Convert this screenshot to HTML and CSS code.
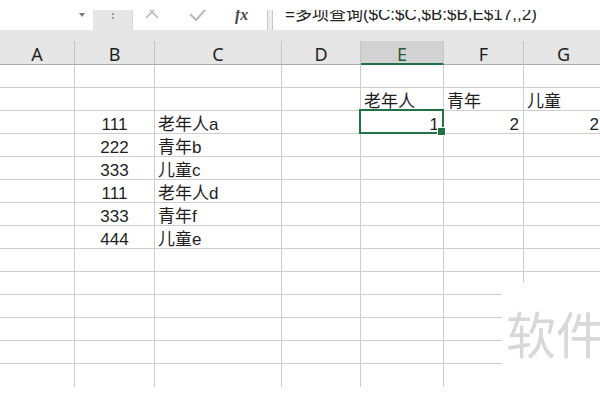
FILE: index.html
```html
<!DOCTYPE html>
<html lang="zh-CN">
<head>
<meta charset="utf-8">
<title>Sheet</title>
<link rel="stylesheet" href="styles.css">
</head>
<body>
<div class="app">
  <div class="topstrip"></div>
  <div class="fbar">
    <div class="namebox"><span class="dd"></span></div>
    <div class="grip"><i></i><i></i></div>
    <div class="btns">
      <svg class="ico-x" width="14" height="14" viewBox="0 0 14 14"><path d="M1 1 L13 13 M13 1 L1 13" stroke="#b9b9b9" stroke-width="1.6" fill="none"/></svg>
      <svg class="ico-ok" width="18" height="16" viewBox="0 0 18 16"><path d="M1 8 L7 14 L17 3" stroke="#b9b9b9" stroke-width="2" fill="none"/></svg>
      <span class="fx">fx</span>
    </div>
    <div class="fgap"></div>
    <div class="formula"><span class="ftext">=多项查询($C:$C,$B:$B,E$17,,2)</span></div>
  </div>
  <div class="band"></div>
  <div class="sheet">
    <div class="h">A</div><div class="h">B</div><div class="h">C</div><div class="h">D</div><div class="h sel">E</div><div class="h">F</div><div class="h">G</div>

    <div class="c"></div><div class="c"></div><div class="c"></div><div class="c"></div><div class="c"></div><div class="c"></div><div class="c"></div>

    <div class="c"></div><div class="c"></div><div class="c"></div><div class="c"></div><div class="c t">老年人</div><div class="c t">青年</div><div class="c t">儿童</div>

    <div class="c"></div><div class="c m">111</div><div class="c t">老年人a</div><div class="c"></div><div class="c n active">1</div><div class="c n">2</div><div class="c n">2</div>

    <div class="c"></div><div class="c m">222</div><div class="c t">青年b</div><div class="c"></div><div class="c"></div><div class="c"></div><div class="c"></div>

    <div class="c"></div><div class="c m">333</div><div class="c t">儿童c</div><div class="c"></div><div class="c"></div><div class="c"></div><div class="c"></div>

    <div class="c"></div><div class="c m">111</div><div class="c t">老年人d</div><div class="c"></div><div class="c"></div><div class="c"></div><div class="c"></div>

    <div class="c"></div><div class="c m">333</div><div class="c t">青年f</div><div class="c"></div><div class="c"></div><div class="c"></div><div class="c"></div>

    <div class="c"></div><div class="c m">444</div><div class="c t">儿童e</div><div class="c"></div><div class="c"></div><div class="c"></div><div class="c"></div>

    <div class="c"></div><div class="c"></div><div class="c"></div><div class="c"></div><div class="c"></div><div class="c"></div><div class="c"></div>
    <div class="c"></div><div class="c"></div><div class="c"></div><div class="c"></div><div class="c"></div><div class="c"></div><div class="c"></div>
    <div class="c"></div><div class="c"></div><div class="c"></div><div class="c"></div><div class="c"></div><div class="c"></div><div class="c"></div>
    <div class="c"></div><div class="c"></div><div class="c"></div><div class="c"></div><div class="c"></div><div class="c"></div><div class="c"></div>
    <div class="c"></div><div class="c"></div><div class="c"></div><div class="c"></div><div class="c"></div><div class="c"></div><div class="c"></div>

    <div class="e"></div><div class="e"></div><div class="e"></div><div class="e"></div><div class="e"></div><div class="e"></div><div class="e"></div>
  </div>
  <div class="wm">软件</div>
</div>
</body>
</html>
```

FILE: styles.css
```css
* { box-sizing: border-box; }
html, body {
  margin: 0;
  padding: 0;
  background: #fff;
  width: 600px;
  height: 400px;
  overflow: hidden;
}
.app {
  position: relative;
  width: 600px;
  height: 400px;
  overflow: hidden;
  font-family: "Liberation Sans", "Noto Sans CJK SC", sans-serif;
  color: #1e1e1e;
}
.topstrip {
  height: 10px;
  background: #fff;
}
.fbar {
  height: 20px;
  display: flex;
  overflow: hidden;
  background: #fff;
}
.namebox {
  width: 93px;
  background: #fff;
  display: flex;
  justify-content: flex-end;
  align-items: flex-start;
  padding-right: 8px;
}
.dd {
  margin-top: 3px;
  width: 0;
  height: 0;
  border-left: 3px solid transparent;
  border-right: 3px solid transparent;
  border-top: 4px solid #7a7a7a;
}
.grip {
  width: 39px;
  background: #e6e6e6;
  display: flex;
  flex-direction: column;
  align-items: center;
  padding-top: 3px;
  gap: 2px;
}
.grip i {
  display: block;
  width: 2px;
  height: 2px;
  background: #9c9c9c;
}
.btns {
  width: 136px;
  background: #fff;
  border-left: 1px solid #d6d6d6;
  border-right: 1px solid #c8c8c8;
  display: flex;
  align-items: flex-start;
  overflow: hidden;
}
.ico-x {
  flex: none;
  margin-left: 12px;
  margin-top: -5px;
}
.ico-ok {
  flex: none;
  margin-left: 30px;
  margin-top: -4px;
}
.fx {
  margin-left: 28px;
  margin-top: -3px;
  font-family: "Liberation Serif", serif;
  font-style: italic;
  font-weight: bold;
  font-size: 16px;
  line-height: 16px;
  color: #4a4a4a;
}
.fgap {
  width: 4px;
  background: #ececec;
}
.formula {
  flex: 1;
  background: #fff;
  border-left: 1px solid #c8c8c8;
  padding-left: 12px;
  overflow: hidden;
  white-space: nowrap;
}
.ftext {
  display: block;
  margin-top: -4px;
  font-size: 17px;
  line-height: 17px;
  color: #222;
}
.band {
  height: 11px;
  background: #e6e6e6;
}
.sheet {
  width: 604px;
  display: grid;
  grid-template-columns: 75px 80px 127px 79px 83px 80px 80px;
  grid-template-rows: 24px repeat(14, 23px) 2px;
}
.h {
  background: #e6e6e6;
  border-right: 1px solid #c6c6c6;
  border-bottom: 1px solid #ababab;
  display: flex;
  align-items: flex-end;
  justify-content: center;
  padding-bottom: 1px;
  font-family: "Noto Sans", "Liberation Sans", sans-serif;
  font-size: 18px;
  line-height: 18px;
  color: #1f1f1f;
}
.h.sel {
  background: #d2d2d2;
  border-bottom: 2px solid #217346;
  color: #2b5a3e;
  padding-bottom: 0;
}
.c {
  border-right: 1px solid #cecece;
  border-bottom: 1px solid #cecece;
  display: flex;
  align-items: flex-end;
  font-size: 17px;
  line-height: 16px;
  white-space: nowrap;
}
.e {
  border-right: 1px solid #cecece;
}
.t {
  padding-left: 3px;
}
.m {
  justify-content: center;
}
.n {
  justify-content: flex-end;
  padding-right: 4px;
}
.active {
  position: relative;
}
.active::after {
  content: "";
  position: absolute;
  top: -2px;
  left: -2px;
  right: -1px;
  bottom: -1px;
  border: 2px solid #217346;
  z-index: 2;
}
.active::before {
  content: "";
  position: absolute;
  right: -3px;
  bottom: -3px;
  width: 7px;
  height: 7px;
  background: #217346;
  border: 1px solid #fff;
  z-index: 3;
}
.wm {
  position: absolute;
  left: 502px;
  top: 283px;
  right: 0;
  bottom: 0;
  background: #fff;
  padding-top: 24px;
  padding-left: 4px;
  font-family: "Noto Sans CJK SC", sans-serif;
  font-size: 50px;
  line-height: 50px;
  color: #d8d8d8;
  white-space: nowrap;
}
```
